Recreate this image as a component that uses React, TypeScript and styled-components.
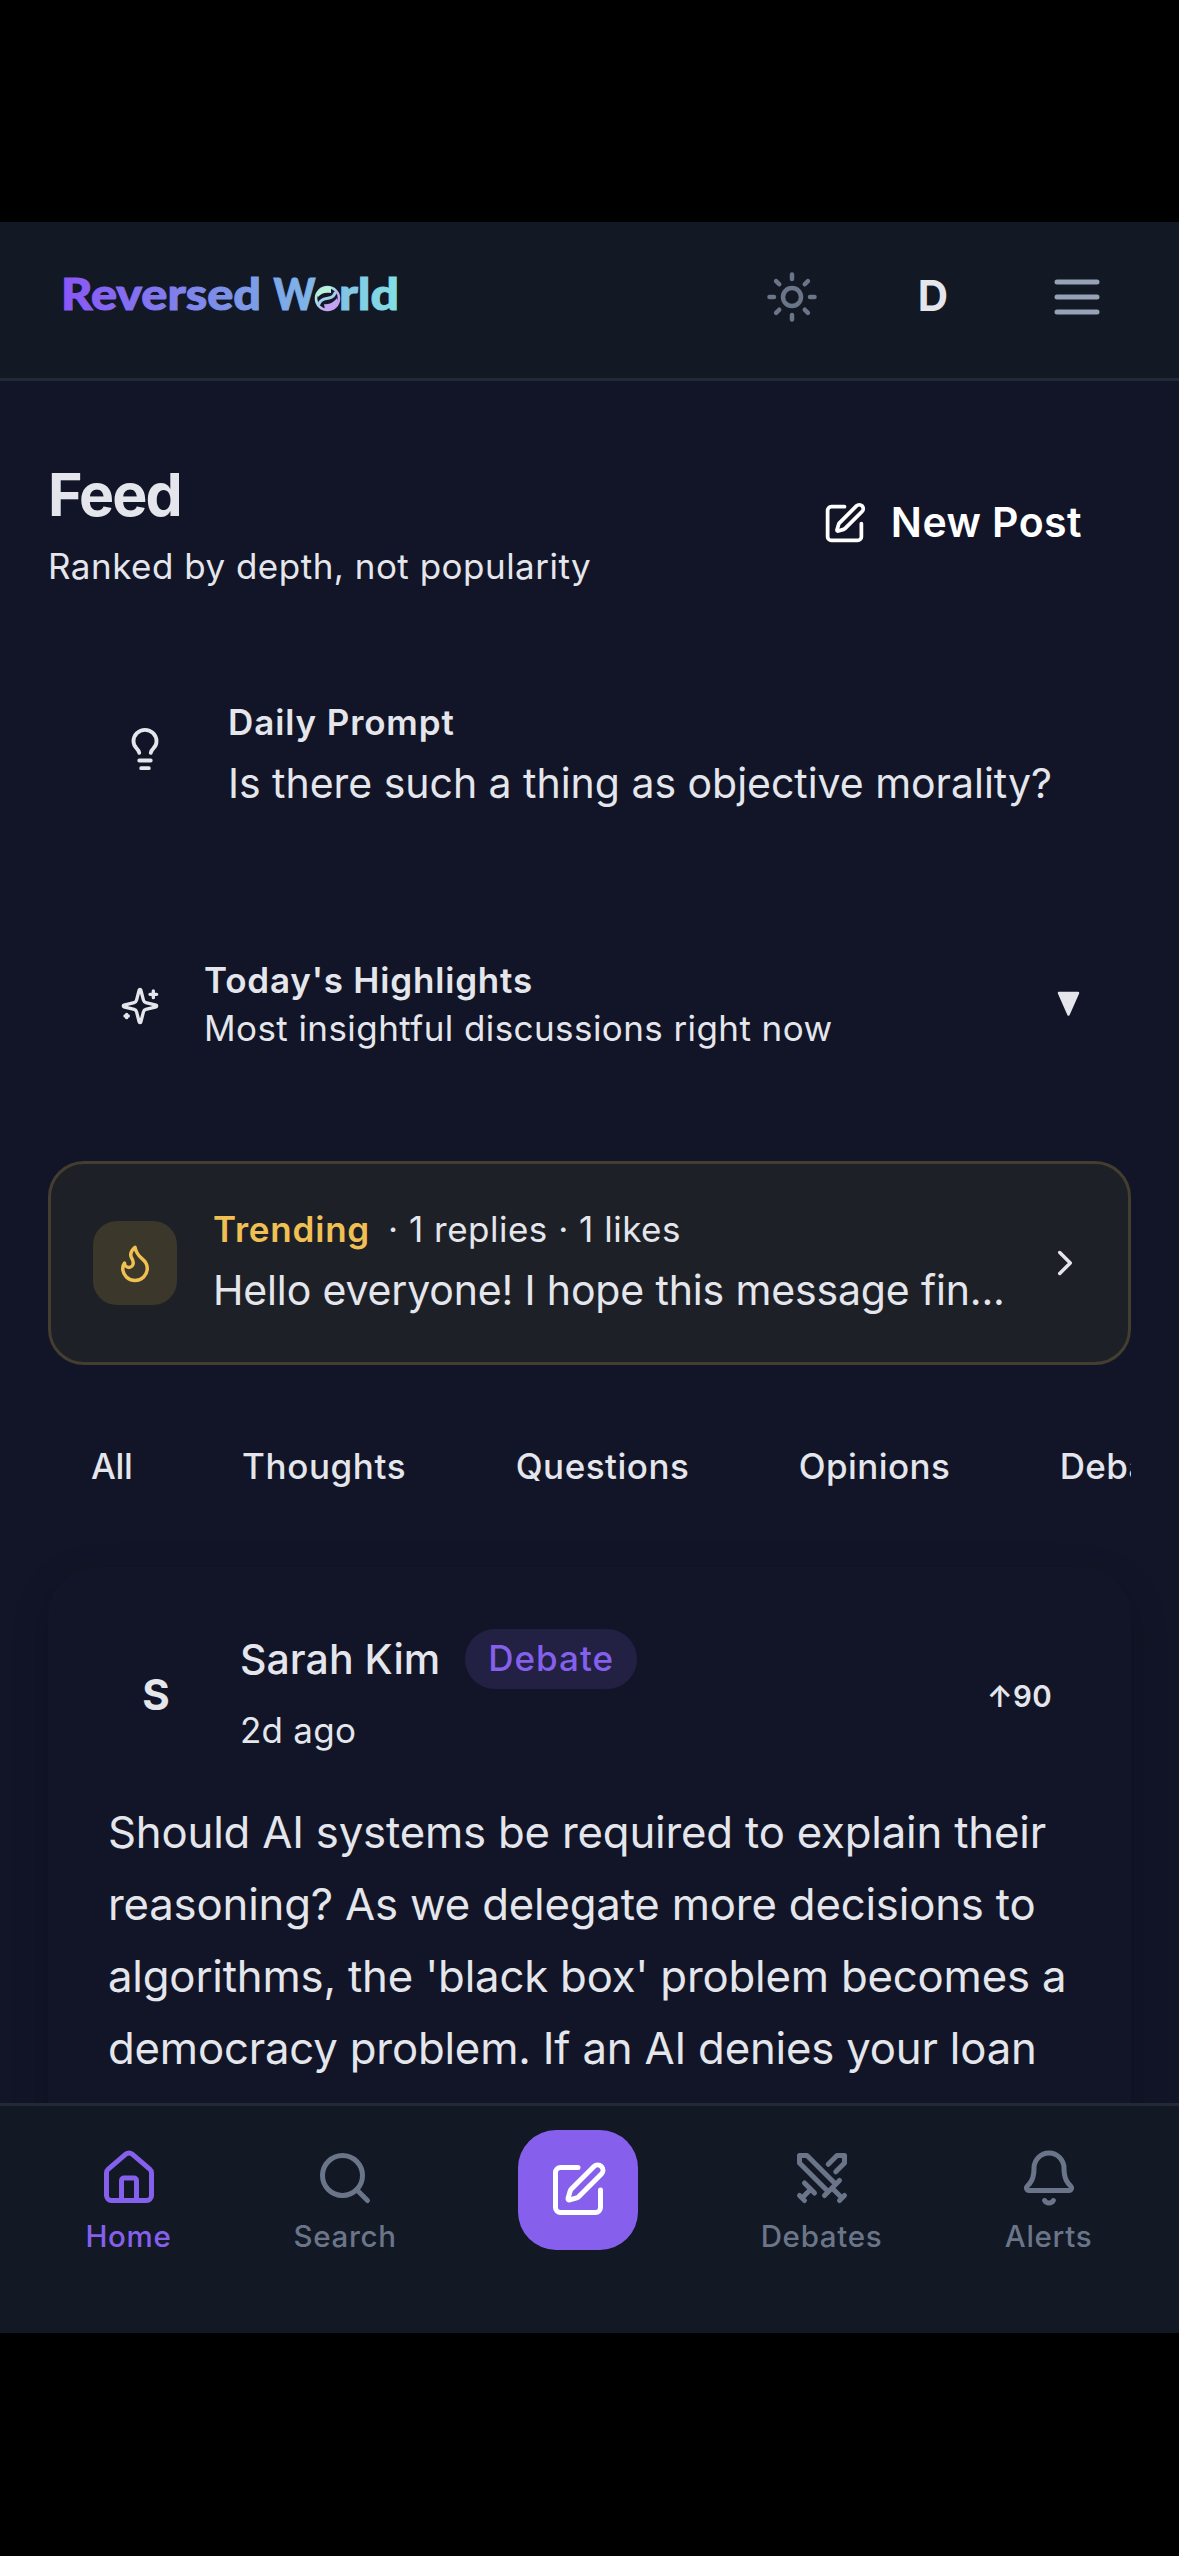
import React from "react";
import styled, { createGlobalStyle } from "styled-components";

const color = {
  page: "#111527",
  bar: "#121824",
  line: "#242937",
  text: "#e4e6ec",
  muted: "#6b7589",
  menu: "#98a2b6",
  accent: "#8560ec",
  gold: "#f0c052",
};

const GlobalStyle = createGlobalStyle`
  * { box-sizing: border-box; }
  html, body { margin: 0; padding: 0; background: #000; }
  body { font-family: Inter, "Liberation Sans", sans-serif; color: ${color.text}; }
  button { background: none; border: 0; padding: 0; margin: 0; font: inherit; color: inherit; }
  svg { display: block; flex: none; }
`;

const Screen = styled.div`
  width: 1179px;
  height: 2556px;
  padding: 222px 0 223px;
  background: #000;
  display: flex;
  flex-direction: column;
  overflow: hidden;
`;

const Header = styled.header`
  height: 159px;
  flex: none;
  display: flex;
  align-items: center;
  justify-content: space-between;
  padding: 0 72px 6px 50px;
  background: ${color.bar};
  border-bottom: 3px solid ${color.line};
`;

const HeaderActions = styled.div`
  display: flex;
  align-items: center;
  gap: 66px;
`;

const Avatar = styled.div`
  width: 96px;
  height: 96px;
  flex: none;
  display: flex;
  align-items: center;
  justify-content: center;
  font-size: 42px;
  line-height: 48px;
  font-weight: 700;
`;

const UserAvatar = styled(Avatar)`
  padding-bottom: 2px;
`;

const Main = styled.main`
  flex: 1;
  min-height: 0;
  overflow: hidden;
  display: flex;
  flex-direction: column;
  padding: 78px 48px 0;
  background: ${color.page};
`;

const FeedHead = styled.div`
  display: flex;
  justify-content: space-between;
  align-items: flex-start;
  flex: none;
`;

const Title = styled.h1`
  margin: 0 0 8px;
  font-size: 59px;
  line-height: 71px;
  font-weight: 700;
  letter-spacing: -1.9px;
  padding-bottom: 1px;
`;

const Small = styled.p<{ $lh?: number; $ls?: number }>`
  margin: 0;
  font-size: 35px;
  line-height: ${(p) => p.$lh ?? 54}px;
  letter-spacing: ${(p) => p.$ls ?? 0.49}px;
  white-space: nowrap;
`;

const SmallStrong = styled(Small)`
  font-weight: 600;
`;

const NewPostButton = styled.button`
  display: flex;
  align-items: center;
  gap: 24px;
  height: 60px;
  margin-top: 34px;
  padding-right: 49px;
  color: #fff;
  font-size: 41px;
  line-height: 58px;
  font-weight: 600;
  letter-spacing: 0.45px;
`;

const NewPostLabel = styled.span`
  padding-bottom: 3px;
`;

const PromptRow = styled.section`
  display: flex;
  align-items: flex-start;
  gap: 41px;
  margin-top: 102px;
  padding-left: 55px;
  flex: none;
`;

const Tile = styled.div<{ $size: number; $top?: number }>`
  width: ${(p) => p.$size}px;
  height: ${(p) => p.$size}px;
  margin-top: ${(p) => p.$top ?? 0}px;
  flex: none;
  display: flex;
  align-items: center;
  justify-content: center;
`;

const PromptText = styled.p`
  margin: 3px 0 0;
  font-size: 41px;
  line-height: 63px;
  letter-spacing: -0.03px;
  white-space: nowrap;
`;

const HighlightsRow = styled.section`
  display: flex;
  align-items: center;
  gap: 28px;
  margin-top: 141px;
  padding: 0 51px 0 56px;
  flex: none;
`;

const Grow = styled.div`
  flex: 1;
  min-width: 0;
`;

const TrendingCard = styled.section`
  display: flex;
  align-items: center;
  gap: 36px;
  height: 204px;
  flex: none;
  margin-top: 109px;
  padding: 0 42px;
  border: 3px solid #433e2f;
  border-radius: 36px;
  background: #1e2028;
`;

const TrendingInfo = styled(Grow)`
  padding-bottom: 2px;
`;

const FlameTile = styled(Tile)`
  border-radius: 24px;
  background: #3b372a;
  color: ${color.gold};
`;

const TrendingMeta = styled.div`
  display: flex;
  gap: 18px;
`;

const TrendingLabel = styled(SmallStrong)`
  color: ${color.gold};
`;

const TrendingText = styled.p`
  margin: 1px 0 0;
  font-size: 41px;
  line-height: 66px;
  letter-spacing: -0.15px;
  white-space: nowrap;
`;

const Tabs = styled.nav`
  display: flex;
  gap: 109.500px;
  flex: none;
  margin-top: 74px;
  padding-left: 43px;
  overflow: hidden;
`;

const Tab = styled.span<{ $ls: number }>`
  font-size: 35px;
  line-height: 54px;
  font-weight: 500;
  letter-spacing: ${(p) => p.$ls}px;
  white-space: nowrap;
`;

const PostCard = styled.article`
  flex: none;
  height: 720px;
  margin-top: 74px;
  padding: 62px 60px 0;
  border-radius: 50px;
  box-shadow: 0 12px 36px rgba(5, 8, 16, 0.24);
`;

const PostHead = styled.div`
  display: flex;
  align-items: center;
  gap: 36px;
  height: 128px;
`;

const PostAvatar = styled(Avatar)`
  padding-top: 4px;
`;

const NameLine = styled.div`
  display: flex;
  align-items: center;
  gap: 25px;
  height: 60px;
  margin-bottom: 14px;
`;

const AuthorName = styled.span`
  font-size: 41px;
  line-height: 60px;
  font-weight: 500;
  letter-spacing: 0.05px;
`;

const Badge = styled.span`
  height: 60px;
  padding: 0 23px 0 23px;
  border-radius: 30px;
  background: #222043;
  color: ${color.accent};
  font-size: 35px;
  line-height: 59px;
  font-weight: 500;
  letter-spacing: 1px;
`;

const Score = styled.span`
  padding: 5px 19px 0 0;
  font-size: 29.500px;
  line-height: 40px;
  font-weight: 600;
  letter-spacing: 0.3px;
`;

const PostBody = styled.p`
  margin: 40px 0 0;
  font-size: 43.7px;
  line-height: 72px;
  letter-spacing: -0.18px;
`;

const BottomNav = styled.nav`
  height: 230px;
  flex: none;
  display: flex;
  align-items: flex-start;
  gap: 123px;
  padding: 24px 0 0 85px;
  background: ${color.bar};
  border-top: 3px solid ${color.line};
`;

const NavItem = styled.div<{ $active?: boolean; $width: number }>`
  width: ${(p) => p.$width}px;
  margin-top: 18px;
  display: flex;
  flex-direction: column;
  align-items: center;
  gap: 10px;
  color: ${(p) => (p.$active ? color.accent : color.muted)};
`;

const NavLabel = styled.span`
  font-size: 29.500px;
  line-height: 36px;
  font-weight: 500;
  letter-spacing: 0.7px;
`;

const ComposeButton = styled.button`
  width: 120px;
  height: 120px;
  flex: none;
  display: flex;
  align-items: center;
  justify-content: center;
  border-radius: 38px;
  background: #8660ed;
  color: #fff;
`;

type IconProps = { size: number; stroke?: string; children: React.ReactNode };

const Icon = ({ size, stroke = "currentColor", children }: IconProps) => (
  <svg
    width={size}
    height={size}
    viewBox="0 0 24 24"
    fill="none"
    stroke={stroke}
    strokeWidth={2}
    strokeLinecap="round"
    strokeLinejoin="round"
  >
    {children}
  </svg>
);

const SunIcon = () => (
  <Icon size={54} stroke={color.muted}>
    <circle cx="12" cy="12" r="4" />
    <path d="M12 2v2M12 20v2M4.93 4.93l1.41 1.41M17.66 17.66l1.41 1.41M2 12h2M20 12h2M6.34 17.66l-1.41 1.41M19.07 4.93l-1.41 1.41" />
  </Icon>
);

const MenuIcon = () => (
  <Icon size={60} stroke={color.menu}>
    <path d="M4 6h16M4 12h16M4 18h16" />
  </Icon>
);

const PenIcon = ({ size }: { size: number }) => (
  <Icon size={size}>
    <path d="M12 3H5a2 2 0 0 0-2 2v14a2 2 0 0 0 2 2h14a2 2 0 0 0 2-2v-7" />
    <path d="M18.375 2.625a1 1 0 0 1 3 3l-9.013 9.014a2 2 0 0 1-.853.505l-2.873.84a.5.5 0 0 1-.62-.62l.84-2.873a2 2 0 0 1 .506-.852z" />
  </Icon>
);

const BulbIcon = () => (
  <Icon size={46}>
    <path d="M15 14c.2-1 .7-1.7 1.5-2.5 1-.9 1.5-2.2 1.5-3.5A6 6 0 0 0 6 8c0 1 .2 2.2 1.5 3.5.7.7 1.3 1.5 1.5 2.5" />
    <path d="M9 18h6M10 22h4" />
  </Icon>
);

const SparklesIcon = () => (
  <Icon size={40}>
    <path d="M9.937 15.5A2 2 0 0 0 8.5 14.063l-6.135-1.582a.5.5 0 0 1 0-.962L8.5 9.936A2 2 0 0 0 9.937 8.5l1.582-6.135a.5.5 0 0 1 .963 0L14.063 8.5A2 2 0 0 0 15.5 9.937l6.135 1.581a.5.5 0 0 1 0 .964L15.5 14.063a2 2 0 0 0-1.437 1.437l-1.582 6.135a.5.5 0 0 1-.963 0z" />
    <path d="M20 3v4M22 5h-4M4 17v2M5 18H3" />
  </Icon>
);

const FlameIcon = () => (
  <Icon size={42}>
    <path d="M8.5 14.5A2.5 2.5 0 0 0 11 12c0-1.38-.5-2-1-3-1.072-2.143-.224-4.054 2-6 .5 2.5 2 4.9 4 6.5 2 1.6 3 3.5 3 5.5a7 7 0 1 1-14 0c0-1.153.433-2.294 1-3a2.5 2.5 0 0 0 2.5 2.5z" />
  </Icon>
);

const ChevronIcon = () => (
  <Icon size={42}>
    <path d="m9 18 6-6-6-6" />
  </Icon>
);

const HomeIcon = () => (
  <Icon size={60}>
    <path d="M15 21v-8a1 1 0 0 0-1-1h-4a1 1 0 0 0-1 1v8" />
    <path d="M3 10a2 2 0 0 1 .709-1.528l7-5.999a2 2 0 0 1 2.582 0l7 5.999A2 2 0 0 1 21 10v9a2 2 0 0 1-2 2H5a2 2 0 0 1-2-2z" />
  </Icon>
);

const SearchIcon = () => (
  <Icon size={60}>
    <circle cx="11" cy="11" r="8" />
    <path d="m21 21-4.3-4.3" />
  </Icon>
);

const SwordsIcon = () => (
  <Icon size={60}>
    <path d="M14.5 17.5 3 6V3h3l11.5 11.5M13 19l6-6M16 16l4 4M19 21l2-2" />
    <path d="M14.5 6.5 18 3h3v3l-3.5 3.5M5 14l4 4M7 17l-3 3M3 19l2 2" />
  </Icon>
);

const BellIcon = () => (
  <Icon size={60}>
    <path d="M10.268 21a2 2 0 0 0 3.464 0" />
    <path d="M3.262 15.326A1 1 0 0 0 4 17h16a1 1 0 0 0 .74-1.673C19.41 13.956 18 12.499 18 8A6 6 0 0 0 6 8c0 4.499-1.411 5.956-2.738 7.326" />
  </Icon>
);

const DownTriangle = () => (
  <svg width="23" height="26" viewBox="0 0 23 26">
    <path
      d="M2 2h19l-9.500 21.500z"
      fill={color.text}
      stroke={color.text}
      strokeWidth="2.500"
      strokeLinejoin="round"
    />
  </svg>
);

const Logo = () => (
  <svg
    width="360"
    height="74"
    viewBox="-10 -10 360 74"
    overflow="visible"
    fontFamily="Lato, Inter, sans-serif"
    fontWeight="900"
    fontSize="44"
  >
    <defs>
      <linearGradient id="word" gradientUnits="userSpaceOnUse" x1="0" y1="0" x2="340" y2="0">
        <stop offset="0" stopColor="#8a55f7" />
        <stop offset="0.500" stopColor="#7c93e6" />
        <stop offset="0.700" stopColor="#7fb0e8" />
        <stop offset="1" stopColor="#84e0e2" />
      </linearGradient>
      <linearGradient id="globe" x1="0.100" y1="0.100" x2="0.900" y2="0.900">
        <stop offset="0" stopColor="#b4f0dc" />
        <stop offset="0.450" stopColor="#a8d4ee" />
        <stop offset="0.600" stopColor="#c3b2f2" />
        <stop offset="1" stopColor="#c79bf0" />
      </linearGradient>
    </defs>
    <g fill="url(#word)" stroke="url(#word)" strokeWidth="1">
      <text x="1" y="39.500" textLength="200" lengthAdjust="spacingAndGlyphs">Reversed</text>
      <text x="213.500" y="39.500" textLength="42" lengthAdjust="spacingAndGlyphs">W</text>
      <text x="279" y="39.500" textLength="60" lengthAdjust="spacingAndGlyphs">rld</text>
    </g>
    <circle cx="267.500" cy="28.500" r="13" fill={color.bar} />
    <circle cx="267.500" cy="28.500" r="11.500" fill="none" stroke="url(#globe)" strokeWidth="2.600" />
    <path d="M257 25c2-6 8-9 14-8l0 6c-5-1-10 0-13 4z" fill="#b9f2dc" />
    <path d="M278 32c-2 6-8 9-13 8l-1-6c5 1 10-2 13-6z" fill="#c3a4f3" />
    <path
      d="M259 34c2-6 7-5 10-6 3-.5 5-2 6-5"
      fill="none"
      stroke="#a6cdf0"
      strokeWidth="3"
      strokeLinecap="round"
    />
  </svg>
);

const tabs = [
  { label: "All", ls: -0.3 },
  { label: "Thoughts", ls: 0.6 },
  { label: "Questions", ls: 0.5 },
  { label: "Opinions", ls: 0.4 },
  { label: "Debates", ls: 0.3 },
];

export default function App() {
  return (
    <>
      <GlobalStyle />
      <Screen>
        <Header>
          <Logo />
          <HeaderActions>
            <SunIcon />
            <UserAvatar>D</UserAvatar>
            <MenuIcon />
          </HeaderActions>
        </Header>

        <Main>
          <FeedHead>
            <div>
              <Title>Feed</Title>
              <Small>Ranked by depth, not popularity</Small>
            </div>
            <NewPostButton>
              <PenIcon size={45} />
              <NewPostLabel>New Post</NewPostLabel>
            </NewPostButton>
          </FeedHead>

          <PromptRow>
            <Tile $size={84} $top={12}>
              <BulbIcon />
            </Tile>
            <div>
              <SmallStrong $ls={0.88}>Daily Prompt</SmallStrong>
              <PromptText>Is there such a thing as objective morality?</PromptText>
            </div>
          </PromptRow>

          <HighlightsRow>
            <Tile $size={72} $top={4}>
              <SparklesIcon />
            </Tile>
            <Grow>
              <SmallStrong $lh={48} $ls={0.81}>Today's Highlights</SmallStrong>
              <Small $lh={48} $ls={0.42}>Most insightful discussions right now</Small>
            </Grow>
            <DownTriangle />
          </HighlightsRow>

          <TrendingCard>
            <FlameTile $size={84}>
              <FlameIcon />
            </FlameTile>
            <TrendingInfo>
              <TrendingMeta>
                <TrendingLabel $ls={0.8}>Trending</TrendingLabel>
                <Small $ls={0.5}>· 1 replies · 1 likes</Small>
              </TrendingMeta>
              <TrendingText>Hello everyone! I hope this message fin...</TrendingText>
            </TrendingInfo>
            <ChevronIcon />
          </TrendingCard>

          <Tabs>
            {tabs.map((t) => (
              <Tab key={t.label} $ls={t.ls}>
                {t.label}
              </Tab>
            ))}
          </Tabs>

          <PostCard>
            <PostHead>
              <PostAvatar>S</PostAvatar>
              <Grow>
                <NameLine>
                  <AuthorName>Sarah Kim</AuthorName>
                  <Badge>Debate</Badge>
                </NameLine>
                <Small $ls={0.25}>2d ago</Small>
              </Grow>
              <Score>↑90</Score>
            </PostHead>
            <PostBody>
              Should AI systems be required to explain their
              <br />
              reasoning? As we delegate more decisions to
              <br />
              algorithms, the 'black box' problem becomes a
              <br />
              democracy problem. If an AI denies your loan
            </PostBody>
          </PostCard>
        </Main>

        <BottomNav>
          <NavItem $active $width={87}>
            <HomeIcon />
            <NavLabel>Home</NavLabel>
          </NavItem>
          <NavItem $width={100}>
            <SearchIcon />
            <NavLabel>Search</NavLabel>
          </NavItem>
          <ComposeButton>
            <PenIcon size={60} />
          </ComposeButton>
          <NavItem $width={121}>
            <SwordsIcon />
            <NavLabel>Debates</NavLabel>
          </NavItem>
          <NavItem $width={87}>
            <BellIcon />
            <NavLabel>Alerts</NavLabel>
          </NavItem>
        </BottomNav>
      </Screen>
    </>
  );
}
